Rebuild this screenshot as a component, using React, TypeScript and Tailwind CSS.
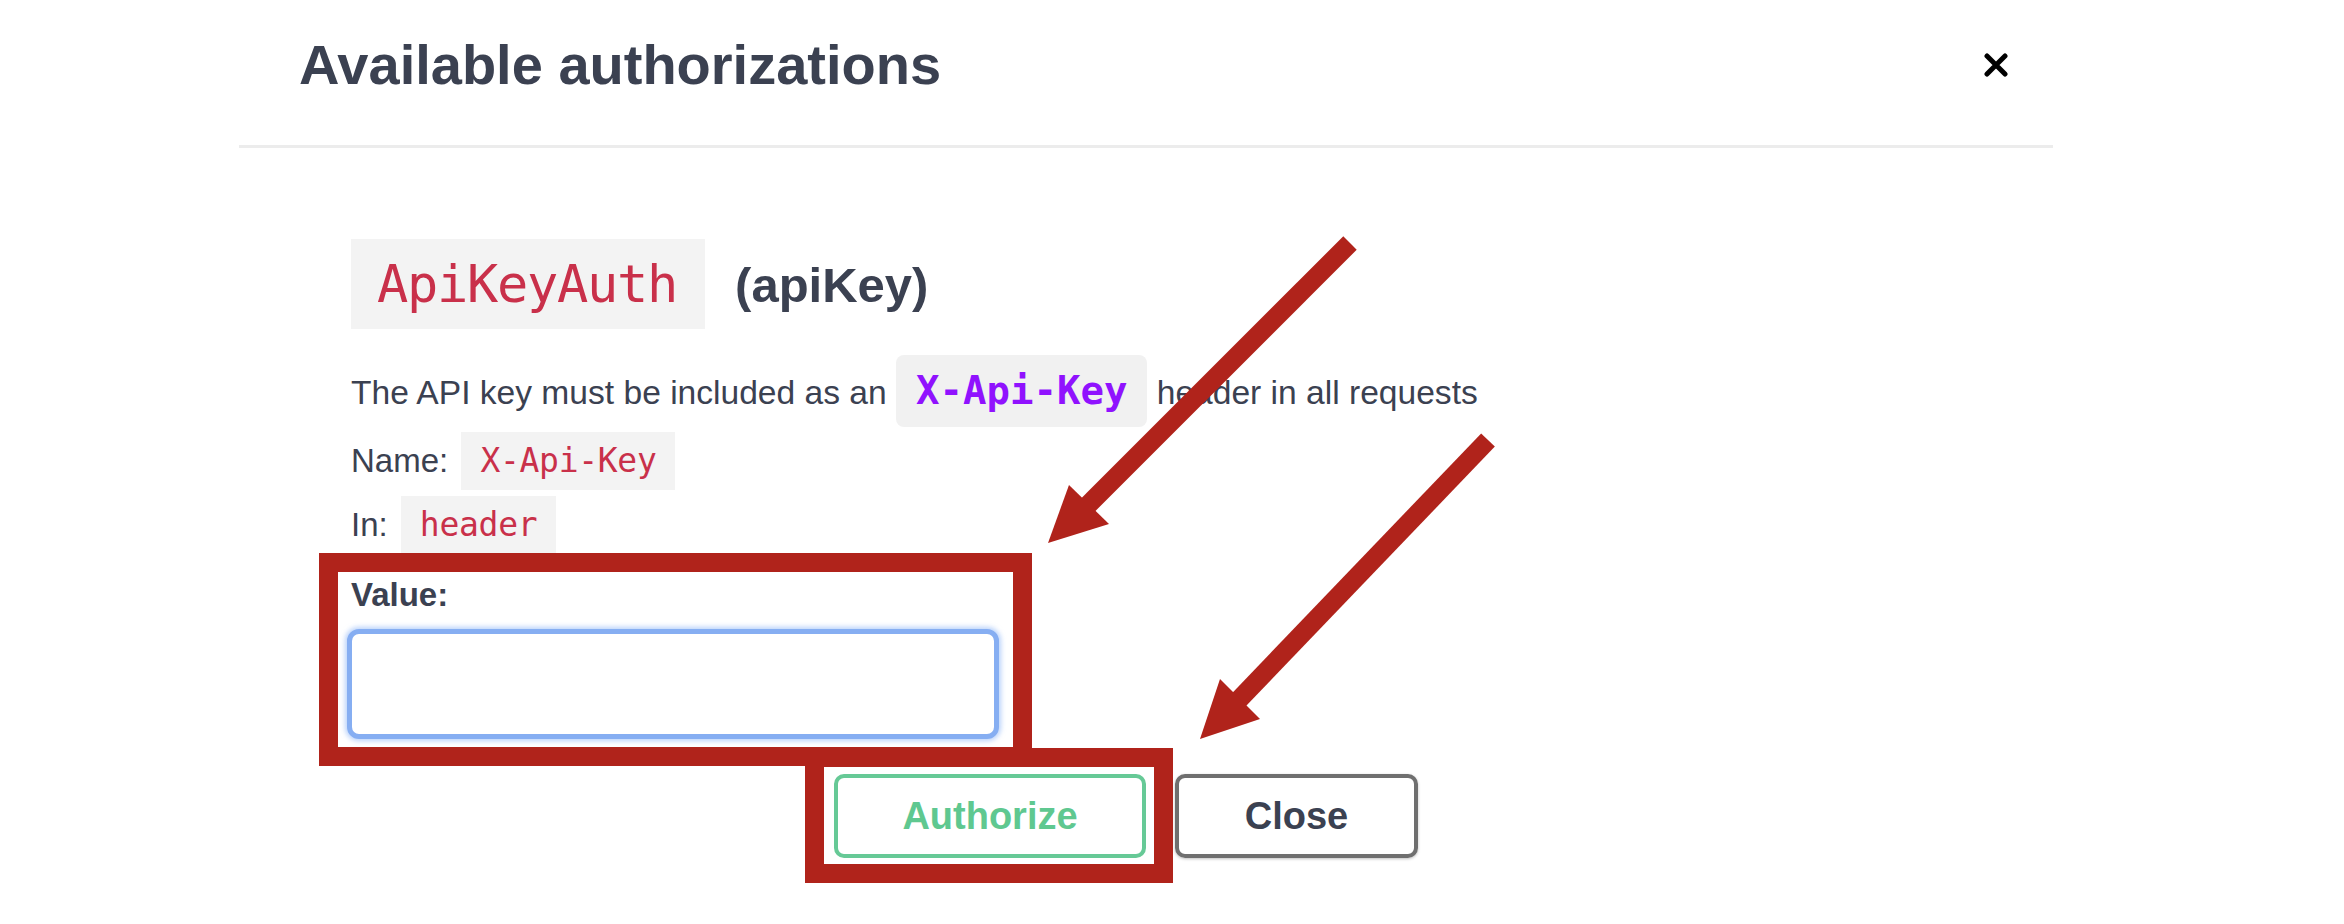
const Chip = ({ children }: { children: React.ReactNode }) => (
  <span className="inline-block ml-[4px] h-[58px] px-[19px] leading-[58px] bg-[#f3f3f3] font-['DejaVu_Sans_Mono',monospace] text-[33px] tracking-[-0.3px] text-[#c9304a] align-baseline">
    {children}
  </span>
);

const Annotations = () => (
  <>
    {/* red frames */}
    <div className="absolute left-[319px] top-[553px] w-[713px] h-[213px] border-[19px] border-[#b0231b]" />
    <div className="absolute left-[805px] top-[748px] w-[368px] h-[135px] border-[19px] border-[#b0231b]" />

    {/* arrows */}
    <svg className="absolute inset-0 pointer-events-none" width="2344" height="924" viewBox="0 0 2344 924">
      <g fill="#b0231b" stroke="#b0231b">
        <line x1="1350" y1="243" x2="1079" y2="514" strokeWidth="19" />
        <polygon points="1048,543 1069,485 1109,524" strokeWidth="0" />
        <line x1="1488" y1="440" x2="1230" y2="709" strokeWidth="19" />
        <polygon points="1200,739 1220,679 1260,719" strokeWidth="0" />
      </g>
    </svg>
  </>
);

export default function App() {
  return (
    <div className="relative w-[2344px] h-[924px] bg-white overflow-hidden font-['Liberation_Sans',Arial,sans-serif] text-[#3b4151]">
      <div className="ml-[239px] w-[1814px]">
        <header className="h-[148px] pb-[15px] pl-[60px] pr-[45px] flex items-center justify-between border-b-[3px] border-[#ececec]">
          <h3 className="text-[56px] font-bold leading-none">Available authorizations</h3>
          <button className="w-[24px] h-[24px] flex items-center justify-center">
            <svg width="24" height="24" viewBox="0 0 24 24" stroke="#000" strokeWidth="5" strokeLinecap="round">
              <path d="M3 3l18 18M21 3L3 21" />
            </svg>
          </button>
        </header>

        <div className="pl-[112px]">
          <div className="mt-[91px] flex items-baseline">
            <span className="inline-block h-[90px] pl-[26px] pr-[28px] leading-[90px] bg-[#f3f3f3] font-['DejaVu_Sans_Mono',monospace] text-[52px] tracking-[-1.3px] text-[#c9304a]">
              ApiKeyAuth
            </span>
            <span className="ml-[30px] text-[49px] font-bold">(apiKey)</span>
          </div>

          <div className="mt-[26px] text-[33.6px] leading-[72px] whitespace-nowrap">
            The API key must be included as an{' '}
            <span className="inline-block h-[72px] px-[20px] leading-[72px] rounded-[8px] bg-[#f1f1f1] font-['DejaVu_Sans_Mono',monospace] text-[39px] font-bold text-[#9012fe]">
              X-Api-Key
            </span>{' '}
            header in all requests
          </div>

          <div className="text-[33px] leading-[64px]">
            Name: <Chip>X-Api-Key</Chip>
          </div>
          <div className="text-[33px] leading-[64px]">
            In: <Chip>header</Chip>
          </div>

          <div className="mt-[18px] text-[33px] font-bold leading-[40px]">Value:</div>
          <input
            type="text"
            className="block mt-[14px] -ml-[4px] h-[110px] w-[652px] rounded-[12px] border-[5px] border-[#86aef2] bg-white shadow-[0_0_5px_2px_rgba(138,180,248,0.6)] outline-none"
          />
        </div>

        <div className="mt-[35px] pr-[40px] flex justify-center gap-[29px]">
          <button className="w-[312px] h-[84px] rounded-[10px] border-[4px] border-[#66c996] text-[38px] font-bold text-[#5fc890]">
            Authorize
          </button>
          <button className="w-[243px] h-[84px] rounded-[10px] border-[4px] border-[#6f6f6f] text-[38px] font-bold text-[#3b4151] shadow-[0_1px_3px_rgba(0,0,0,0.25)]">
            Close
          </button>
        </div>
      </div>

      <Annotations />
    </div>
  );
}
